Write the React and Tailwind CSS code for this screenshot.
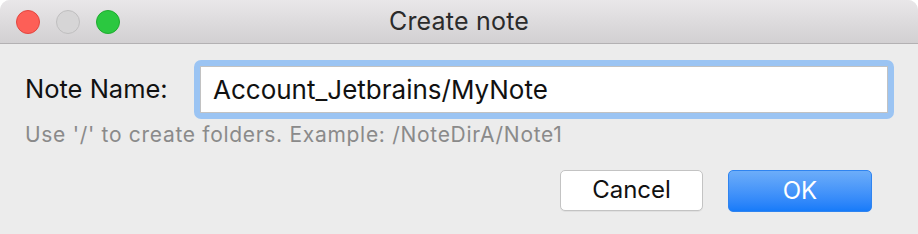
export default function App() {
  const font = { fontFamily: 'Inter, "Liberation Sans", sans-serif' };
  return (
    <div className="w-[918px] h-[234px] bg-white overflow-hidden" style={font}>
      <div className="flex flex-col h-full rounded-t-[10px] overflow-hidden bg-[#ececec]">
        {/* title bar */}
        <div className="relative h-[44px] shrink-0 flex items-center justify-center border-b border-[#b3b1b3] bg-gradient-to-b from-[#e9e7e9] to-[#d2d0d2]">
          <div className="absolute left-[16px] top-[10px] flex gap-[16px]">
            <span className="w-[24px] h-[24px] rounded-full bg-[#fd5f57] border border-[#e2463f]" />
            <span className="w-[24px] h-[24px] rounded-full bg-[#d6d5d6] border border-[#bfbebf]" />
            <span className="w-[24px] h-[24px] rounded-full bg-[#2bc840] border border-[#1fab2f]" />
          </div>
          <span className="text-[25px] text-[#2b2b2b] tracking-[0.2px]">Create note</span>
        </div>

        {/* body */}
        <div className="flex-1 flex flex-col pl-[25px] pr-[24px] pt-[16px]">
          <div className="flex items-center">
            <span className="w-[169px] text-[25.5px] text-[#111]">Note Name:</span>
            <div className="flex-1 rounded-[7px] bg-[#9bc4f3] p-[6px]">
              <div className="h-[47px] bg-white border border-[#c2c2c2] flex items-center pl-[12px] text-[26px] text-[#111]">
                Account_Jetbrains/MyNote
              </div>
            </div>
          </div>
          <div className="text-[21px] tracking-[0.7px] text-[#8a8a8a]">Use '/' to create folders. Example: /NoteDirA/Note1</div>
          <div className="flex justify-end gap-[25px] mt-[19px] pr-[22px]">
            <button className="w-[143px] h-[41px] rounded-[5px] bg-white border border-[#c3c3c3] text-[24px] text-[#111] shadow-[0_1px_0_rgba(0,0,0,0.05)]">
              Cancel
            </button>
            <button className="w-[144px] h-[42px] rounded-[5px] bg-gradient-to-b from-[#6cadf9] to-[#167bf9] border border-[#2f84f0] text-[24px] text-white">
              OK
            </button>
          </div>
        </div>
      </div>
    </div>
  );
}
